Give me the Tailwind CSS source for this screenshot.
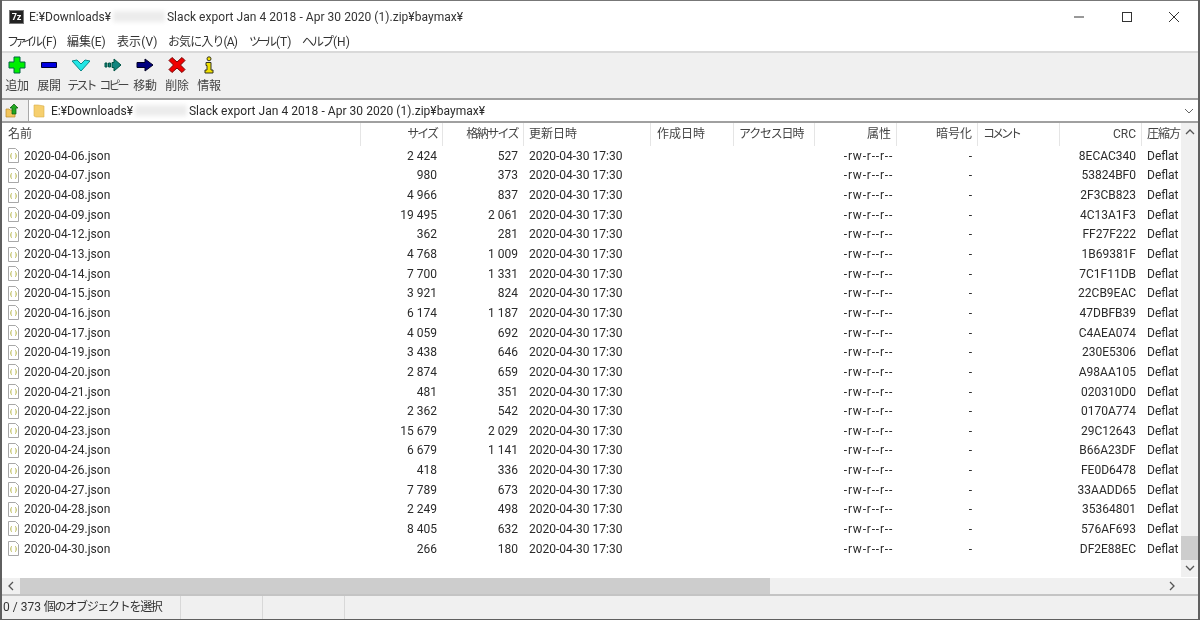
<!DOCTYPE html>
<html lang="ja">
<head>
    <meta charset="UTF-8">
    <title>7-Zip</title>
    <script src="https://cdn.jsdelivr.net/npm/@tailwindcss/browser@4"></script>
</head>
<body class="bg-white">
<div class="w-[1200px] h-[620px] overflow-hidden flex flex-col bg-white text-[#2a2a2a] text-[12px] border-x-2 border-[#5f5f5f] blur-[0.3px] font-['Roboto','Noto_Sans_CJK_JP',sans-serif]">

    <!-- title bar -->
    <div class="h-[32px] shrink-0 flex items-center border-t border-[#777] relative">
        <div class="ml-[7px] mt-[1px] w-[15px] h-[14px] bg-[#222] border border-[#777] text-white text-[9px] font-bold leading-[12px] text-center">7z</div>
        <span class="ml-[5px] mt-[1px] text-[#333]">E:¥Downloads¥</span>
        <span class="ml-[2px] w-[52px] h-[11px] bg-[#ececec] blur-[2px]"></span>
        <span class="ml-[2px] mt-[1px] text-[#333] tracking-[0.04px]">Slack export Jan 4 2018 - Apr 30 2020 (1).zip¥baymax¥</span>
        <div class="ml-auto flex items-center">
            <svg class="w-[46px] h-[16px]" viewBox="0 0 46 16"><path d="M20 8h10" stroke="#333" stroke-width="1"/></svg>
            <svg class="w-[48px] h-[16px]" viewBox="0 0 48 16"><rect x="22.500" y="3.500" width="9" height="9" fill="none" stroke="#333"/></svg>
            <svg class="w-[50px] h-[16px]" viewBox="0 0 50 16"><path d="M21 3l10 10M31 3L21 13" stroke="#333" stroke-width="1" fill="none"/></svg>
        </div>
    </div>

    <!-- menu -->
    <div class="h-[19px] shrink-0 flex items-center pl-[5px] text-[12px] text-[#333] whitespace-nowrap">
        <span class="w-[60px]"><span class="tracking-[-4px]">ファイル</span><span class="ml-[3px]">(F)</span></span>
        <span class="w-[50px] tracking-[-0.1px]">編集(E)</span>
        <span class="w-[51px] tracking-[0.1px]">表示(V)</span>
        <span class="w-[81px] tracking-[-0.9px]">お気に入り(A)</span>
        <span class="w-[53px]"><span class="tracking-[-4px]">ツール</span><span class="ml-[3px]">(T)</span></span>
        <span><span class="tracking-[-2px]">ヘルプ</span><span class="ml-[1px]">(H)</span></span>
    </div>

    <!-- toolbar -->
    <div class="h-[47px] shrink-0 bg-[#f0f0f0] border-t-2 border-[#d9d9d9] flex -ml-[1px] text-[12px] tracking-[-0.3px] text-[#444] whitespace-nowrap">
        <div class="w-[32px] flex flex-col items-center pt-[3px]">
            <svg class="w-[18px] h-[18px]" viewBox="0 0 18 18"><path d="M6 1h6v5h5v6h-5v5H6v-5H1V6h5z" fill="#00f000" stroke="#064" stroke-width="1"/></svg>
            <span class="mt-[3px]">追加</span>
        </div>
        <div class="w-[32px] flex flex-col items-center pt-[3px]">
            <svg class="w-[18px] h-[18px]" viewBox="0 0 18 18"><path d="M1.500 6.500h15v5h-15z" fill="#0000e0" stroke="#003" stroke-width="1"/></svg>
            <span class="mt-[3px]">展開</span>
        </div>
        <div class="w-[32px] flex flex-col items-center pt-[3px]">
            <svg class="w-[18px] h-[18px]" viewBox="0 0 18 18"><path d="M0 5l5-1 4 4 4-4 5 1-9 10z" fill="#22e6e6" stroke="#0a8a8a" stroke-width="1"/></svg>
            <span class="mt-[3px] tracking-[-2.9px]">テスト</span>
        </div>
        <div class="w-[32px] flex flex-col items-center pt-[3px]">
            <svg class="w-[18px] h-[18px]" viewBox="0 0 18 18"><path d="M1 7h2v4H1zM4.500 7h2v4h-2zM8 6.500h2V3l7 6-7 6v-3.500H8z" fill="#11857f" stroke="#054" stroke-width="1"/></svg>
            <span class="mt-[3px] tracking-[-2.9px]">コピー</span>
        </div>
        <div class="w-[32px] flex flex-col items-center pt-[3px]">
            <svg class="w-[18px] h-[18px]" viewBox="0 0 18 18"><path d="M1 6.500h8V3l8 6-8 6v-3.500H1z" fill="#000080" stroke="#002" stroke-width="1"/></svg>
            <span class="mt-[3px]">移動</span>
        </div>
        <div class="w-[32px] flex flex-col items-center pt-[3px]">
            <svg class="w-[18px] h-[18px]" viewBox="0 0 18 18"><path d="M4 1.500l5 4.500 5-4.500 3 3-4.500 4.500 4.500 4.500-3 3-5-4.500-5 4.500-3-3L5.500 9 1 4.500z" fill="#f00000" stroke="#700" stroke-width="1"/></svg>
            <span class="mt-[3px]">削除</span>
        </div>
        <div class="w-[32px] flex flex-col items-center pt-[3px]">
            <svg class="w-[18px] h-[18px]" viewBox="0 0 18 18"><circle cx="9" cy="2.800" r="2" fill="#f0e000" stroke="#332" stroke-width="1"/><path d="M6 6.500h5v7.500h2v3H5v-3h2V9.500H6z" fill="#f0e000" stroke="#332" stroke-width="1"/></svg>
            <span class="mt-[3px]">情報</span>
        </div>
    </div>

    <!-- address bar -->
    <div class="h-[25px] shrink-0 flex border-t-2 border-b-2 border-[#a0a0a0] bg-[#f0f0f0]">
        <div class="w-[26px] shrink-0 flex items-center pl-[3px]">
            <svg class="w-[15px] h-[15px]" viewBox="0 0 15 15"><path d="M1 6h3l1 1h5v7H1z" fill="#f2c55c" stroke="#b98a2a" stroke-width="0.7"/><path d="M9 1l4 4h-2v6H7V5H5z" fill="#22a822" stroke="#0a5a0a" stroke-width="0.7"/></svg>
        </div>
        <div class="flex-1 flex items-center bg-white border-l border-[#a8a8a8] pl-[4px]">
            <svg class="w-[12px] h-[15px]" viewBox="0 0 12 15"><path d="M1 2h4l6 1v11H3l-2-1z" fill="#f6cf6e" stroke="#d9ae4a" stroke-width="0.6"/></svg>
            <span class="ml-[6px] mt-[1px]">E:¥Downloads¥</span>
            <span class="ml-[2px] w-[52px] h-[11px] bg-[#ececec] blur-[2px]"></span>
            <span class="ml-[2px] mt-[1px] tracking-[0.04px]">Slack export Jan 4 2018 - Apr 30 2020 (1).zip¥baymax¥</span>
            <svg class="ml-auto mr-[4px] w-[10px] h-[10px]" viewBox="0 0 10 10"><path d="M1 3l4 4 4-4" fill="none" stroke="#666" stroke-width="1"/></svg>
        </div>
    </div>

    <!-- list + scrollbars -->
    <div class="flex-1 flex min-h-0">
        <div class="w-[1179px] shrink-0 overflow-hidden">
            <div id="head" class="grid grid-cols-[359px_82px_81px_127px_83px_81px_82px_81px_82px_82px_39px] h-[23px] items-center text-[#444] whitespace-nowrap">
                <span class="pl-[6px] h-[23px] leading-[23px] border-r border-[#e5e5e5]">名前</span>
                <span class="pr-[5px] h-[23px] leading-[23px] text-right border-r border-[#e5e5e5] tracking-[-2px]">サイズ</span>
                <span class="pr-[5px] h-[23px] leading-[23px] text-right border-r border-[#e5e5e5] tracking-[-1.600px]">格納サイズ</span>
                <span class="pl-[5px] h-[23px] leading-[23px] border-r border-[#e5e5e5]">更新日時</span>
                <span class="pl-[6px] h-[23px] leading-[23px] border-r border-[#e5e5e5]">作成日時</span>
                <span class="pl-[5px] h-[23px] leading-[23px] border-r border-[#e5e5e5] tracking-[-1.200px]">アクセス日時</span>
                <span class="pr-[5px] h-[23px] leading-[23px] text-right border-r border-[#e5e5e5]">属性</span>
                <span class="pr-[5px] h-[23px] leading-[23px] text-right border-r border-[#e5e5e5]">暗号化</span>
                <span class="pl-[5px] h-[23px] leading-[23px] border-r border-[#e5e5e5] tracking-[-3px]">コメント</span>
                <span class="pr-[5px] h-[23px] leading-[23px] text-right border-r border-[#e5e5e5]">CRC</span>
                <span class="pl-[5px] h-[23px] leading-[23px] tracking-[-1px]">圧縮方</span>
            </div>
            <div id="rows"></div>
        </div>
        <div class="flex-1 bg-[#f0f0f0] flex flex-col items-center h-[454px]">
            <svg class="w-[10px] h-[10px] mt-[4px]" viewBox="0 0 10 10"><path d="M1 7l4-4 4 4" fill="none" stroke="#555" stroke-width="1.300"/></svg>
            <div class="flex-1"></div>
            <div class="w-full h-[24px] bg-[#cdcdcd]"></div>
            <svg class="w-[10px] h-[10px] mt-[3px] mb-[4px]" viewBox="0 0 10 10"><path d="M1 3l4 4 4-4" fill="none" stroke="#555" stroke-width="1.300"/></svg>
        </div>
    </div>

    <!-- horizontal scrollbar -->
    <div class="h-[16px] shrink-0 bg-[#f0f0f0] flex items-center">
        <svg class="w-[18px] h-[10px]" viewBox="0 0 18 10"><path d="M11 1L7 5l4 4" fill="none" stroke="#555" stroke-width="1.300"/></svg>
        <div class="w-[750px] h-[16px] bg-[#cdcdcd]"></div>
        <svg class="ml-auto mr-[21px] w-[10px] h-[10px]" viewBox="0 0 10 10"><path d="M3 1l4 4-4 4" fill="none" stroke="#555" stroke-width="1.300"/></svg>
    </div>

    <!-- status bar -->
    <div class="h-[26px] shrink-0 bg-[#f0f0f0] border-t-2 border-[#c4c4c4] border-b border-b-[#5f5f5f] flex items-center text-[#333]">
        <span class="w-[179px] h-full leading-[22px] pl-[1px] border-r border-[#d8d8d8] whitespace-nowrap">0 / 373 <span class="tracking-[-1.300px]">個のオブジェクトを選択</span></span>
        <span class="w-[82px] h-full border-r border-[#d8d8d8]"></span>
        <span class="w-[82px] h-full border-r border-[#d8d8d8]"></span>
    </div>
</div>

<script>
    const files = [
        ["06", "2 424", "527", "8ECAC340"],
        ["07", "980", "373", "53824BF0"],
        ["08", "4 966", "837", "2F3CB823"],
        ["09", "19 495", "2 061", "4C13A1F3"],
        ["12", "362", "281", "FF27F222"],
        ["13", "4 768", "1 009", "1B69381F"],
        ["14", "7 700", "1 331", "7C1F11DB"],
        ["15", "3 921", "824", "22CB9EAC"],
        ["16", "6 174", "1 187", "47DBFB39"],
        ["17", "4 059", "692", "C4AEA074"],
        ["19", "3 438", "646", "230E5306"],
        ["20", "2 874", "659", "A98AA105"],
        ["21", "481", "351", "020310D0"],
        ["22", "2 362", "542", "0170A774"],
        ["23", "15 679", "2 029", "29C12643"],
        ["24", "6 679", "1 141", "B66A23DF"],
        ["26", "418", "336", "FE0D6478"],
        ["27", "7 789", "673", "33AADD65"],
        ["28", "2 249", "498", "35364801"],
        ["29", "8 405", "632", "576AF693"],
        ["30", "266", "180", "DF2E88EC"],
    ];
    const icon = '<svg class="w-[13px] h-[15px] shrink-0 ml-[5px] mr-[4px]" viewBox="0 0 13 15"><path d="M1.500.5h7l3 3v11h-10z" fill="#fff" stroke="#a8a8a8"/><path d="M5 5.500c-1 0-1 .5-1 1.500s0 1-.7 1c.7 0 .7 0 .7 1s0 1.500 1 1.500M8 5.500c1 0 1 .5 1 1.500s0 1 .7 1c-.7 0-.7 0-.7 1s0 1.500-1 1.500" fill="none" stroke="#b9b850" stroke-width="1"/></svg>';
    document.getElementById("rows").innerHTML = files.map(f => `
        <div class="grid grid-cols-[359px_82px_81px_127px_83px_81px_82px_81px_82px_82px_39px] h-[19.65px] items-center whitespace-nowrap">
            <span class="flex items-center">${icon}2020-04-${f[0]}.json</span>
            <span class="pr-[6px] text-right">${f[1]}</span>
            <span class="pr-[6px] text-right">${f[2]}</span>
            <span class="pl-[5px]">2020-04-30 17:30</span>
            <span></span>
            <span></span>
            <span class="pr-[4px] text-right tracking-[0.8px]">-rw-r--r--</span>
            <span class="pr-[6px] text-right">-</span>
            <span></span>
            <span class="pr-[6px] text-right">${f[3]}</span>
            <span class="pl-[5px]">Deflat</span>
        </div>`).join("");
</script>
</body>
</html>
